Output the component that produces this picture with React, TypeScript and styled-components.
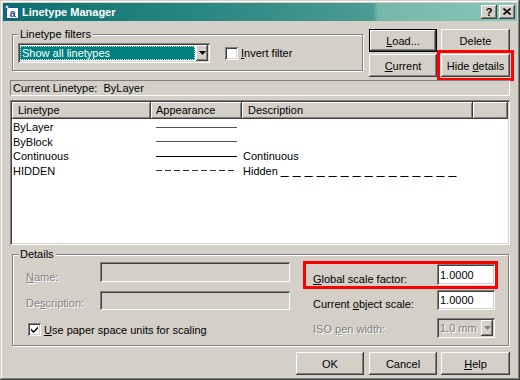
import React from 'react'
import styled, { createGlobalStyle, css } from 'styled-components'

const FACE = '#d4d0c8'
const SHADOW = '#808080'
const DARK = '#404040'
const HILITE = '#ffffff'

const GlobalStyle = createGlobalStyle`
  html, body {
    margin: 0;
    padding: 0;
    background: ${FACE};
  }
  body {
    font-family: "Liberation Sans", Arial, sans-serif;
    font-size: 11px;
    color: #000;
  }
  * {
    box-sizing: border-box;
  }
`

const raised = css`
  box-shadow: inset -1px -1px ${DARK}, inset 1px 1px ${HILITE}, inset -2px -2px ${SHADOW}, inset 2px 2px ${FACE};
`

const sunken = css`
  box-shadow: inset 1px 1px ${SHADOW}, inset -1px -1px ${HILITE}, inset 2px 2px ${DARK}, inset -2px -2px ${FACE};
`

const disabledText = css`
  color: ${SHADOW};
  text-shadow: 1px 1px 0 ${HILITE};
`

const Window = styled.div`
  width: 520px;
  height: 380px;
  padding: 3px;
  background: ${FACE};
  box-shadow: inset -1px -1px ${DARK}, inset 1px 1px ${FACE}, inset -2px -2px ${SHADOW}, inset 2px 2px ${HILITE};
  display: flex;
  flex-direction: column;
`

const TitleBar = styled.div`
  height: 18px;
  flex: none;
  display: flex;
  align-items: center;
  padding: 0 2px 0 1px;
  background: linear-gradient(90deg, #0b6f6f 0%, #2a8882 40%, #4c9c93 72%, #74b8aa 73%, #88c6b8 100%);
  color: #fff;
  font-weight: bold;
  font-size: 11px;
`

const TitleText = styled.span`
  margin-left: 2px;
  line-height: 18px;
`

const CaptionButton = styled.button<{ $gap?: number }>`
  width: 16px;
  height: 14px;
  margin-left: ${({ $gap }) => $gap ?? 0}px;
  padding: 0 0 1px 0;
  border: 0;
  background: ${FACE};
  ${raised};
  display: flex;
  align-items: center;
  justify-content: center;
  font-family: "Liberation Sans", Arial, sans-serif;
  font-weight: bold;
  font-size: 11px;
  color: #000;
`

const Body = styled.div`
  flex: 1;
  display: flex;
  flex-direction: column;
  padding: 7px 7px 0 7px;
`

const TopRow = styled.div`
  display: flex;
  align-items: flex-start;
`

const GroupBox = styled.fieldset<{ $width: number; $height: number }>`
  width: ${({ $width }) => $width}px;
  height: ${({ $height }) => $height}px;
  margin: 0 0 0 2px;
  padding: 0;
  min-width: 0;
  border: 1px solid ${SHADOW};
  box-shadow: inset 1px 1px 0 ${HILITE}, 1px 1px 0 ${HILITE};
`

const Legend = styled.legend`
  margin-left: 5px;
  padding: 0 2px;
  line-height: 13px;
  font-size: 11px;
  background: ${FACE};
`

const FilterContent = styled.div`
  display: flex;
  align-items: center;
  padding: 2px 0 0 5px;
`

const Combo = styled.div<{ $width: number; $disabled?: boolean }>`
  width: ${({ $width }) => $width}px;
  height: 20px;
  padding: 2px;
  display: flex;
  background: ${({ $disabled }) => ($disabled ? FACE : '#fff')};
  ${sunken};
`

const ComboValue = styled.div<{ $selected?: boolean; $disabled?: boolean }>`
  flex: 1;
  display: flex;
  align-items: center;
  margin: 1px 1px 1px 0;
  padding-left: 1px;
  white-space: nowrap;
  overflow: hidden;
  ${({ $selected }) =>
    $selected &&
    css`
      background: #008080;
      color: #fff;
      border: 1px dotted #c8e8d8;
    `}
  ${({ $disabled }) => $disabled && disabledText};
`

const ComboArrow = styled.div`
  width: 12px;
  flex: none;
  background: ${FACE};
  ${raised};
  display: flex;
  align-items: center;
  justify-content: center;
`

const CheckRow = styled.label<{ $indent?: number }>`
  display: flex;
  align-items: center;
  margin-left: ${({ $indent }) => $indent ?? 0}px;
  white-space: nowrap;
`

const CheckBox = styled.span`
  width: 13px;
  height: 13px;
  flex: none;
  margin-right: 3px;
  background: #fff;
  ${sunken};
  display: flex;
  align-items: center;
  justify-content: center;
`

const ButtonGrid = styled.div`
  margin: 1px 0 0 auto;
  display: grid;
  grid-template-columns: 68px 69px;
  grid-template-rows: 23px 23px;
  column-gap: 4px;
  row-gap: 2px;
`

const Button = styled.button<{ $width?: number; $default?: boolean; $highlight?: boolean; $gap?: number }>`
  width: ${({ $width }) => ($width ? `${$width}px` : 'auto')};
  height: 23px;
  margin-left: ${({ $gap }) => $gap ?? 0}px;
  padding: 0;
  border: 0;
  background: ${FACE};
  font-family: "Liberation Sans", Arial, sans-serif;
  font-size: 11px;
  color: #000;
  ${({ $default }) =>
    $default
      ? css`
          box-shadow: inset 0 0 0 1px #000, inset -2px -2px ${DARK}, inset 2px 2px ${HILITE},
            inset -3px -3px ${SHADOW}, inset 3px 3px ${FACE};
        `
      : raised};
  ${({ $highlight }) =>
    $highlight &&
    css`
      outline: 3px solid #ff0000;
      outline-offset: 1px;
    `}
`

const Key = styled.u`
  text-decoration: underline;
  text-underline-offset: 1px;
`

const CurrentField = styled.div`
  margin-top: 3px;
  height: 16px;
  padding-left: 2px;
  line-height: 14px;
  border-top: 1px solid ${SHADOW};
  border-left: 1px solid ${SHADOW};
  border-bottom: 1px solid ${HILITE};
  border-right: 1px solid ${HILITE};
  white-space: pre;
`

const ListView = styled.div`
  margin-top: 4px;
  height: 145px;
  padding: 2px;
  background: #fff;
  ${sunken};
  display: flex;
  flex-direction: column;
  overflow: hidden;
`

const HeaderRow = styled.div`
  display: flex;
  height: 17px;
  flex: none;
  margin-bottom: 1px;
`

const HeaderCell = styled.div<{ $width?: number; $pad?: number }>`
  ${({ $width }) => ($width ? `width: ${$width}px; flex: none;` : 'flex: 1;')}
  padding-left: ${({ $pad }) => $pad ?? 6}px;
  line-height: 16px;
  background: ${FACE};
  ${raised};
  white-space: nowrap;
`

const ItemRow = styled.div`
  display: flex;
  height: 14.5px;
  flex: none;
`

const ItemCell = styled.div<{ $width?: number; $pad?: number }>`
  ${({ $width }) => ($width ? `width: ${$width}px; flex: none;` : 'flex: 1;')}
  padding-left: ${({ $pad }) => $pad ?? 1}px;
  line-height: 14.5px;
  white-space: nowrap;
`

const SampleCell = styled.div<{ $width: number }>`
  width: ${({ $width }) => $width}px;
  flex: none;
  padding-left: 5px;
  display: flex;
  align-items: center;
`

const Sample = styled.span<{ $dashed?: boolean; $color: string }>`
  display: block;
  width: 81px;
  height: 1px;
  background: ${({ $dashed, $color }) =>
    $dashed ? `repeating-linear-gradient(90deg, ${$color} 0 6px, transparent 6px 9px)` : $color};
`

const Dashes = styled.span`
  margin-left: 3px;
  font-size: 14px;
  line-height: 0;
  word-spacing: 0.3px;
  vertical-align: 1px;
`

const DetailsGrid = styled.div`
  display: grid;
  grid-template-columns: 264px 195px;
  column-gap: 13px;
  padding-left: 13px;
`

const Column = styled.div`
  display: flex;
  flex-direction: column;
`

const FieldRow = styled.div<{ $top: number }>`
  display: flex;
  align-items: flex-end;
  margin-top: ${({ $top }) => $top}px;
`

const FieldLabel = styled.span<{ $width: number; $disabled?: boolean; $drop?: number }>`
  width: ${({ $width }) => $width}px;
  flex: none;
  line-height: 13px;
  margin-bottom: ${({ $drop }) => -($drop ?? 0)}px;
  white-space: nowrap;
  ${({ $disabled }) => $disabled && disabledText};
`

const TextBox = styled.div<{ $width: number; $height?: number; $disabled?: boolean }>`
  width: ${({ $width }) => $width}px;
  height: ${({ $height }) => $height ?? 20}px;
  flex: none;
  align-self: flex-start;
  padding: 0 0 0 3px;
  display: flex;
  align-items: center;
  background: ${({ $disabled }) => ($disabled ? FACE : '#fff')};
  ${sunken};
`

const ScaleRow = styled.div<{ $highlight?: boolean; $top: number; $height: number }>`
  display: flex;
  align-items: flex-end;
  height: ${({ $height }) => $height}px;
  margin-top: ${({ $top }) => $top}px;
  padding: ${({ $highlight }) => ($highlight ? '0 0 0 7px' : '0 3px 0 10px')};
  ${({ $highlight }) =>
    $highlight &&
    css`
      border: 3px solid #ff0000;
    `}
`

const ScaleLabel = styled.span<{ $disabled?: boolean; $drop?: number }>`
  flex: 1;
  line-height: 13px;
  margin-bottom: ${({ $drop }) => -($drop ?? 0)}px;
  white-space: nowrap;
  ${({ $disabled }) => $disabled && disabledText};
`

const BottomRow = styled.div`
  display: flex;
  justify-content: flex-end;
  margin-top: 6px;
`

const TitleIcon = () => (
  <svg width="16" height="16" viewBox="0 0 16 16">
    <rect x="2.5" y="3.5" width="12" height="11" fill="#fff" stroke="#1c4c9c" />
    <text x="8.5" y="13" fontSize="11" fontFamily="Liberation Sans, Arial, sans-serif" fill="#1c4c9c" textAnchor="middle">
      a
    </text>
    <path d="M3 0.5 L3.8 2.2 L5.5 3 L3.8 3.8 L3 5.5 L2.2 3.8 L0.5 3 L2.2 2.2 Z" fill="#fff" stroke="#1c4c9c" strokeWidth="0.5" />
  </svg>
)

const ArrowGlyph = ({ color = '#000' }: { color?: string }) => (
  <svg width="7" height="4" viewBox="0 0 7 4">
    <path d="M0 0 H7 L3.5 4 Z" fill={color} />
  </svg>
)

const CheckGlyph = () => (
  <svg width="9" height="9" viewBox="0 0 9 9">
    <path d="M1 3.5 L3.5 6 L8 1.5 V3.5 L3.5 8 L1 5.5 Z" fill="#000" />
  </svg>
)

const CloseGlyph = () => (
  <svg width="8" height="7" viewBox="0 0 8 7">
    <path d="M0.5 0.5 L7.5 6.5 M7.5 0.5 L0.5 6.5" stroke="#000" strokeWidth="1.6" />
  </svg>
)

type Linetype = {
  name: string
  color: string
  dashed?: boolean
  description?: string
  dashes?: boolean
}

const linetypes: Linetype[] = [
  { name: 'ByLayer', color: '#555048' },
  { name: 'ByBlock', color: '#555048' },
  { name: 'Continuous', color: '#000', description: 'Continuous' },
  { name: 'HIDDEN', color: '#333', dashed: true, description: 'Hidden', dashes: true },
]

const COLS = [139, 91, 231]

export default function App() {
  return (
    <>
      <GlobalStyle />
      <Window>
        <TitleBar>
          <TitleIcon />
          <TitleText>Linetype Manager</TitleText>
          <CaptionButton $gap={0} style={{ marginLeft: 'auto' }}>
            ?
          </CaptionButton>
          <CaptionButton $gap={2}>
            <CloseGlyph />
          </CaptionButton>
        </TitleBar>

        <Body>
          <TopRow>
            <GroupBox $width={351} $height={43}>
              <Legend>Linetype filters</Legend>
              <FilterContent>
                <Combo $width={192}>
                  <ComboValue $selected>Show all linetypes</ComboValue>
                  <ComboArrow>
                    <ArrowGlyph />
                  </ComboArrow>
                </Combo>
                <CheckRow $indent={15}>
                  <CheckBox />
                  <span>
                    <Key>I</Key>nvert filter
                  </span>
                </CheckRow>
              </FilterContent>
            </GroupBox>

            <ButtonGrid>
              <Button $default>
                <Key>L</Key>oad...
              </Button>
              <Button>Delete</Button>
              <Button>
                <Key>C</Key>urrent
              </Button>
              <Button $highlight>
                Hide <Key>d</Key>etails
              </Button>
            </ButtonGrid>
          </TopRow>

          <CurrentField>Current Linetype:  ByLayer</CurrentField>

          <ListView>
            <HeaderRow>
              <HeaderCell $width={COLS[0]}>Linetype</HeaderCell>
              <HeaderCell $width={COLS[1]} $pad={5}>
                Appearance
              </HeaderCell>
              <HeaderCell $width={COLS[2]}>Description</HeaderCell>
              <HeaderCell />
            </HeaderRow>
            {linetypes.map((lt) => (
              <ItemRow key={lt.name}>
                <ItemCell $width={COLS[0]}>{lt.name}</ItemCell>
                <SampleCell $width={COLS[1]}>
                  <Sample $color={lt.color} $dashed={lt.dashed} />
                </SampleCell>
                <ItemCell $width={COLS[2]}>
                  {lt.description}
                  {lt.dashes && <Dashes>_ _ _ _ _ _ _ _ _ _ _ _ _ _ _</Dashes>}
                </ItemCell>
              </ItemRow>
            ))}
          </ListView>

          <GroupBox $width={497} $height={98} style={{ marginTop: 3 }}>
            <Legend>Details</Legend>
            <DetailsGrid>
              <Column>
                <FieldRow $top={1}>
                  <FieldLabel $width={74} $disabled $drop={2}>
                    <Key>N</Key>ame:
                  </FieldLabel>
                  <TextBox $width={190} $disabled />
                </FieldRow>
                <FieldRow $top={9}>
                  <FieldLabel $width={74} $disabled $drop={0}>
                    De<Key>s</Key>cription:
                  </FieldLabel>
                  <TextBox $width={190} $height={19} $disabled />
                </FieldRow>
                <CheckRow $indent={2} style={{ marginTop: 13 }}>
                  <CheckBox>
                    <CheckGlyph />
                  </CheckBox>
                  <span>
                    <Key>U</Key>se paper space units for scaling
                  </span>
                </CheckRow>
              </Column>

              <Column>
                <ScaleRow $highlight $top={0} $height={28}>
                  <ScaleLabel $drop={0}>
                    <Key>G</Key>lobal scale factor:
                  </ScaleLabel>
                  <TextBox $width={58} $height={21}>
                    1.0000
                  </TextBox>
                </ScaleRow>
                <ScaleRow $top={1} $height={20}>
                  <ScaleLabel $drop={1}>
                    Current <Key>o</Key>bject scale:
                  </ScaleLabel>
                  <TextBox $width={58}>1.0000</TextBox>
                </ScaleRow>
                <ScaleRow $top={8} $height={20}>
                  <ScaleLabel $disabled $drop={-2}>
                    ISO <Key>p</Key>en width:
                  </ScaleLabel>
                  <Combo $width={58} $disabled>
                    <ComboValue $disabled>1.0 mm</ComboValue>
                    <ComboArrow>
                      <ArrowGlyph color={SHADOW} />
                    </ComboArrow>
                  </Combo>
                </ScaleRow>
              </Column>
            </DetailsGrid>
          </GroupBox>

          <BottomRow>
            <Button $width={68}>OK</Button>
            <Button $width={68} $gap={5}>
              Cancel
            </Button>
            <Button $width={69} $gap={4}>
              <Key>H</Key>elp
            </Button>
          </BottomRow>
        </Body>
      </Window>
    </>
  )
}
